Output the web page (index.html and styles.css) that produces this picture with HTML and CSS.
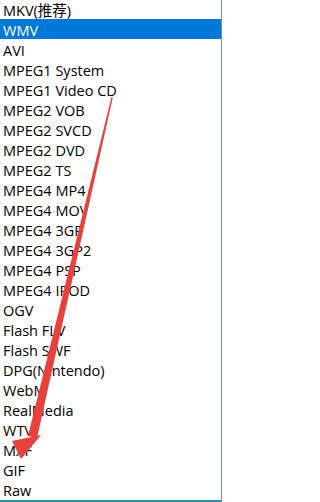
FILE: index.html
```html
<!DOCTYPE html>
<html>
<head>
<meta charset="utf-8">
<link rel="stylesheet" href="styles.css">
</head>
<body>
<div class="box">
  <ul class="list">
    <li>MKV(推荐)</li>
    <li class="sel">WMV</li>
    <li>AVI</li>
    <li>MPEG1 System</li>
    <li>MPEG1 Video CD</li>
    <li>MPEG2 VOB</li>
    <li>MPEG2 SVCD</li>
    <li>MPEG2 DVD</li>
    <li>MPEG2 TS</li>
    <li>MPEG4 MP4</li>
    <li>MPEG4 MOV</li>
    <li>MPEG4 3GP</li>
    <li>MPEG4 3GP2</li>
    <li>MPEG4 PSP</li>
    <li>MPEG4 IPOD</li>
    <li>OGV</li>
    <li>Flash FLV</li>
    <li>Flash SWF</li>
    <li>DPG(Nintendo)</li>
    <li>WebM</li>
    <li>RealMedia</li>
    <li>WTV</li>
    <li>MXF</li>
    <li>GIF</li>
    <li>Raw</li>
  </ul>
  <svg class="arrow" width="224" height="502" viewBox="0 0 224 502">
    <polygon points="111.5,97 112.8,97.5 37,438 28,436" fill="#e8403c"/>
    <polygon points="12,441 41,435 21,459" fill="#e8403c"/>
  </svg>
</div>
</body>
</html>
```

FILE: styles.css
```css
html, body {
  margin: 0;
  padding: 0;
  background: #fff;
}
.box {
  position: relative;
  width: 221px;
  height: 500px;
  overflow: hidden;
  border-right: 1px solid #6f93ab;
  border-bottom: 2px solid #3189ad;
  background: #fff;
}
.list {
  list-style: none;
  margin: -1px 0 0 0;
  padding: 0;
  font-family: "Open Sans", "Noto Sans CJK SC", sans-serif;
  font-size: 14.5px;
  color: #000;
}
.list li {
  box-sizing: border-box;
  height: 20px;
  padding: 4px 0 0 3px;
  line-height: 16px;
  white-space: nowrap;
}
.list li.sel {
  background: #0078d7;
  color: #fff;
}
.arrow {
  position: absolute;
  left: 0;
  top: 0;
  pointer-events: none;
}
```
